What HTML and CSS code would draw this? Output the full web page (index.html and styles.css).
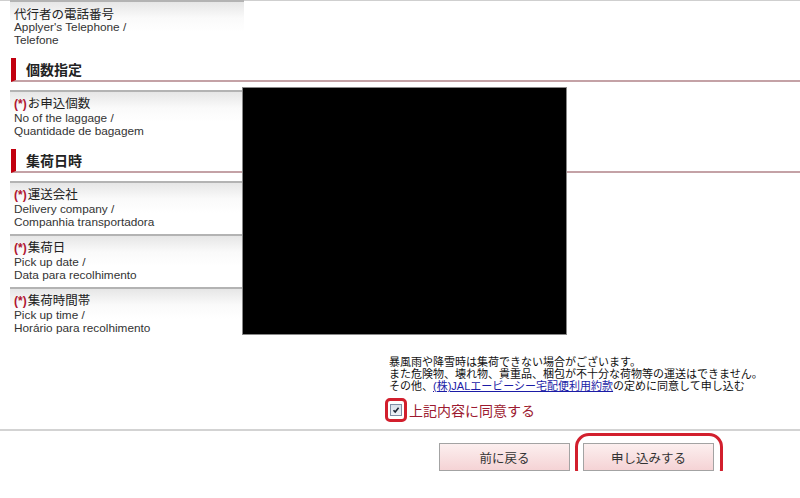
FILE: index.html
```html
<!DOCTYPE html>
<html>
<head>
  <title>集荷お申込み確認</title>
  <link rel="stylesheet" href="styles.css">
</head>
<body>
  <div class="form">
    <div class="row first">
      <div class="label">
        <div class="jp">代行者の電話番号</div>
        <div class="en">Applyer's Telephone /<br>Telefone</div>
      </div>
    </div>

    <h2 class="section">個数指定</h2>
    <div class="row">
      <div class="label">
        <div class="jp"><span class="req">(*)</span>お申込個数</div>
        <div class="en">No of the laggage /<br>Quantidade de bagagem</div>
      </div>
    </div>

    <h2 class="section">集荷日時</h2>
    <div class="row">
      <div class="label">
        <div class="jp"><span class="req">(*)</span>運送会社</div>
        <div class="en">Delivery company /<br>Companhia transportadora</div>
      </div>
    </div>
    <div class="row">
      <div class="label">
        <div class="jp"><span class="req">(*)</span>集荷日</div>
        <div class="en">Pick up date /<br>Data para recolhimento</div>
      </div>
    </div>
    <div class="row">
      <div class="label">
        <div class="jp"><span class="req">(*)</span>集荷時間帯</div>
        <div class="en">Pick up time /<br>Horário para recolhimento</div>
      </div>
    </div>

    <div class="redact"></div>
  </div>

  <div class="agree">
    <p class="notes">
      暴風雨や降雪時は集荷できない場合がございます。<br>
      また危険物、壊れ物、貴重品、梱包が不十分な荷物等の運送はできません。<br>
      その他、<a href="#">(株)JALエービーシー宅配便利用約款</a>の定めに同意して申し込む
    </p>
    <label class="consent">
      <span class="mark">
        <span class="check">
          <svg width="8" height="8" viewBox="0 0 8 8"><path d="M1.5 4.2 L3.2 6 L6.6 1.8" fill="none" stroke="#1d2635" stroke-width="1.6"/></svg>
        </span>
      </span>
      上記内容に同意する
    </label>
  </div>

  <div class="actions">
    <button class="btn">前に戻る</button>
    <button class="btn submit">申し込みする</button>
  </div>
</body>
</html>
```

FILE: styles.css
```css
body {
  margin: 0;
  width: 800px;
  font-family: "Noto Sans CJK JP", "Liberation Sans", sans-serif;
  color: #222;
  background: white;
}
.form {
  position: relative;
  border-top: 1px solid #cfcfcf;
}
.row {
  display: flex;
}
.label {
  width: 226px;
  margin-left: 10px;
  height: 48px;
  padding: 3px 4px 0;
  border-top: 2px solid #b3b3b3;
  background: linear-gradient(#e6e6e6, #fafafa 16px, #fff 30px);
}
.first .label {
  margin-top: -1px;
  height: 46px;
  padding-top: 4px;
}
.jp {
  font-size: 12.5px;
  line-height: 15px;
  color: #222;
}
.req {
  color: #b0142e;
  font-weight: bold;
  font-family: "Liberation Sans", sans-serif;
  font-size: 12px;
  margin-right: 1px;
}
.en {
  font-family: "Liberation Sans", sans-serif;
  font-size: 11.8px;
  line-height: 13px;
  color: #333;
}
.section {
  margin: 6px 0 8px 11px;
  height: 22px;
  padding-left: 10px;
  border-left: 5px solid #c2000f;
  border-bottom: 2px solid #c4a2a6;
  font-size: 14px;
  line-height: 22px;
  font-weight: bold;
  color: #222;
}
.redact {
  position: absolute;
  left: 242px;
  top: 86px;
  width: 325px;
  height: 248px;
  box-sizing: border-box;
  border: 1px solid #888;
  background: #000;
}
.agree {
  padding-left: 389px;
  padding-top: 15px;
}
.notes {
  margin: 0;
  font-size: 11px;
  line-height: 12px;
  color: #111;
  white-space: nowrap;
}
.notes a {
  color: #1b1ba6;
  text-decoration: underline;
  font-family: "Liberation Sans", "Noto Sans CJK JP", sans-serif;
}
.consent {
  display: flex;
  align-items: center;
  height: 24px;
  margin: 6px 0 0 -4px;
  font-size: 14px;
  color: #9c1a30;
  gap: 2px;
}
.mark {
  width: 16px;
  height: 18px;
  border: 3px solid #d21f2d;
  border-radius: 5px;
  display: flex;
  align-items: center;
  justify-content: center;
}
.check {
  width: 10px;
  height: 10px;
  border: 1px solid #7f8ea6;
  background: linear-gradient(#d9e0ea, #eef2f7);
  display: flex;
  align-items: center;
  justify-content: center;
}
.actions {
  margin-top: 7px;
  border-top: 2px solid #d3d3d3;
  padding: 12px 0 0 439px;
  display: flex;
  gap: 13px;
}
.btn {
  position: relative;
  width: 131px;
  height: 28px;
  border: 1px solid #a3a3a3;
  background: linear-gradient(#fcefef, #f5d3d5);
  font-family: "Noto Sans CJK JP", sans-serif;
  font-size: 12.5px;
  color: #333;
  padding: 0;
  cursor: pointer;
}
.submit::after {
  content: "";
  position: absolute;
  top: -11px;
  left: -9px;
  right: -10px;
  bottom: -13px;
  border: 3px solid #d21f2d;
  border-radius: 14px;
}
```
